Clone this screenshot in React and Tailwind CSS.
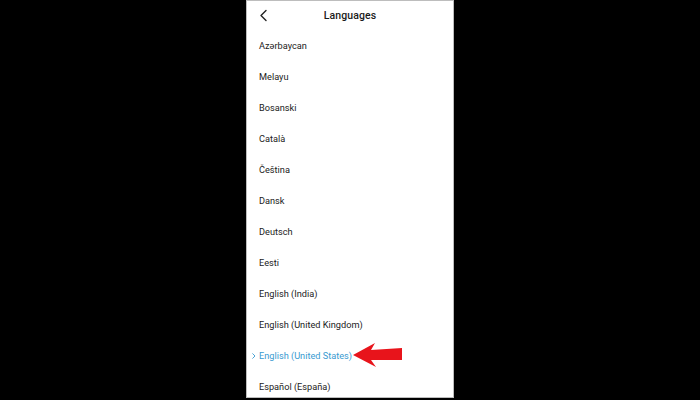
const LANGS = [
  'Azərbaycan',
  'Melayu',
  'Bosanski',
  'Català',
  'Čeština',
  'Dansk',
  'Deutsch',
  'Eesti',
  'English (India)',
  'English (United Kingdom)',
  'English (United States)',
  'Español (España)',
];

const SELECTED = 'English (United States)';

export default function App() {
  return (
    <div className="w-[700px] h-[400px] bg-black flex justify-center overflow-hidden font-['Roboto',sans-serif]">
      <div className="w-[208px] h-[398px] bg-white border border-[#bdbdbd] flex flex-col overflow-hidden">
        {/* Header */}
        <div className="h-[29px] shrink-0 relative flex items-center justify-center">
          <svg className="absolute left-[12px] top-[8px]" width="9" height="13" viewBox="0 0 9 13" fill="none">
            <path d="M7 1.5 L2 6.5 L7 11.5" stroke="#222" strokeWidth="1.4" strokeLinecap="round" strokeLinejoin="round" />
          </svg>
          <span className="text-[10.5px] font-medium text-[#1a1a1a] tracking-[0.1px]">Languages</span>
        </div>

        {/* List */}
        <div className="flex flex-col">
          {LANGS.map((lang) => {
            const active = lang === SELECTED;
            return (
              <div key={lang} className="h-[31px] shrink-0 relative flex items-center pl-[12px]">
                {active && (
                  <svg className="absolute left-[5px] top-[13px]" width="4" height="6" viewBox="0 0 4 6" fill="none">
                    <path d="M0.7 0.7 L3 3 L0.7 5.3" stroke="#3a9bd1" strokeWidth="0.9" strokeLinecap="round" strokeLinejoin="round" />
                  </svg>
                )}
                <span className={active ? 'text-[9.2px] text-[#3a9bd1]' : 'text-[9.2px] text-[#222]'}>{lang}</span>
                {active && (
                  <svg className="absolute left-[106px] top-[2px]" width="52" height="28" viewBox="354 341 52 28">
                    <polygon points="354,354 376,342 372,349 403,347 403,359 372,359 377,366" fill="#e8141b" />
                  </svg>
                )}
              </div>
            );
          })}
        </div>
      </div>
    </div>
  );
}
